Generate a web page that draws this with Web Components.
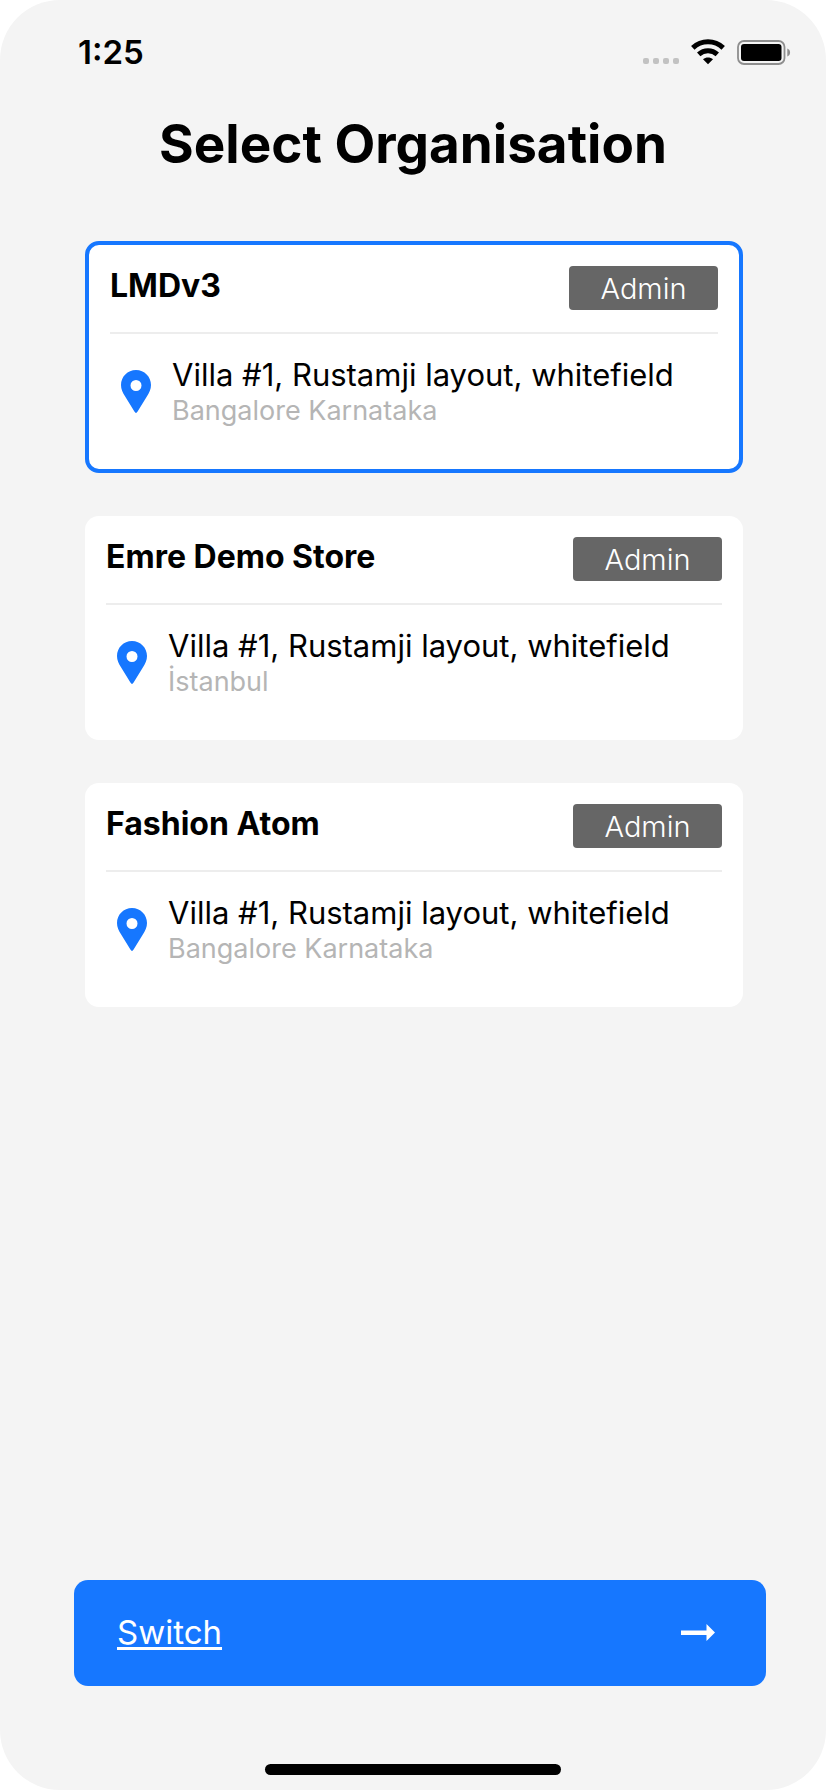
<!DOCTYPE html>
<html lang="en">
<head>
<meta charset="utf-8">
<meta name="viewport" content="width=device-width, initial-scale=1">
<title>Select Organisation</title>
<style>
  html { background: #fff; }
  body { margin: 0 2px 2px 0; font-family: Inter, "Liberation Sans", sans-serif; color: #000; }
</style>
</head>
<body>
<app-screen>
  <status-bar slot="status">1:25</status-bar>
  <span slot="title">Select Organisation</span>
  <org-card selected>
    <span slot="name">LMDv3</span>
    <role-badge slot="role">Admin</role-badge>
    <span slot="address">Villa #1, Rustamji layout, whitefield</span>
    <span slot="city">Bangalore Karnataka</span>
  </org-card>
  <org-card>
    <span slot="name">Emre Demo Store</span>
    <role-badge slot="role">Admin</role-badge>
    <span slot="address">Villa #1, Rustamji layout, whitefield</span>
    <span slot="city">İstanbul</span>
  </org-card>
  <org-card>
    <span slot="name">Fashion Atom</span>
    <role-badge slot="role">Admin</role-badge>
    <span slot="address">Villa #1, Rustamji layout, whitefield</span>
    <span slot="city">Bangalore Karnataka</span>
  </org-card>
  <switch-button slot="action">Switch</switch-button>
</app-screen>

<script>
  const define = (name, html, setup) => {
    const template = document.createElement('template');
    template.innerHTML = html;
    customElements.define(name, class extends HTMLElement {
      constructor() {
        super();
        this.attachShadow({ mode: 'open' }).append(template.content.cloneNode(true));
      }
      connectedCallback() { if (setup) setup(this); }
    });
  };

  define('app-screen', `
    <style>
      :host { display: flex; flex-direction: column; box-sizing: border-box; min-height: calc(100vh - 2px);
              background: #f4f4f4; border-radius: 60px; padding-bottom: 15px; }
      h1 { margin: 0; padding-top: 7px; font-size: 53px; line-height: 66px; font-weight: 700; text-align: center; }
      main { display: flex; flex-direction: column; gap: 43px; padding: 64px 83px 43px 85px; }
      footer { margin-top: auto; padding: 0 60px 0 74px; }
      .home { width: 296px; height: 11px; margin: 78px auto 0; border-radius: 6px; background: #000; }
    </style>
    <slot name="status"></slot>
    <h1><slot name="title"></slot></h1>
    <main><slot></slot></main>
    <footer><slot name="action"></slot></footer>
    <div class="home"></div>
  `);

  define('status-bar', `
    <style>
      :host { display: flex; align-items: center; justify-content: space-between;
              height: 40px; padding: 32px 35px 32px 78px; font-size: 33px; line-height: 40px; font-weight: 600; }
      .icons { display: flex; align-items: center; gap: 12px; }
      svg { display: block; }
    </style>
    <time><slot></slot></time>
    <div class="icons">
      <svg width="36" height="26" viewBox="0 0 36 26" fill="#c2c2c2" aria-hidden="true">
        <rect y="19" width="6" height="6" rx="2"/><rect x="10" y="19" width="6" height="6" rx="2"/>
        <rect x="20" y="19" width="6" height="6" rx="2"/><rect x="30" y="19" width="6" height="6" rx="2"/>
      </svg>
      <svg width="34" height="26" viewBox="0 0 34 26" aria-hidden="true">
        <path d="M1.8 8.9C10.4.8 23.6.8 32.2 8.9" fill="none" stroke="#000" stroke-width="5"/>
        <path d="M7.7 15.3C13 10.5 21 10.5 26.3 15.3" fill="none" stroke="#000" stroke-width="5"/>
        <path d="M12 20.3C14.8 17.9 19.2 17.9 22 20.3L17 25.2Z"/>
      </svg>
      <svg width="54" height="26" viewBox="0 0 54 26" aria-hidden="true">
        <rect x="1" y="2" width="46.5" height="23" rx="6" fill="none" stroke="#8e8e8e" stroke-width="1.8"/>
        <rect x="4" y="5" width="40.5" height="17" rx="3"/>
        <path d="M50.3 9.5C54 10.8 54 16.2 50.3 17.5Z" fill="#8e8e8e"/>
      </svg>
    </div>
  `);

  define('role-badge', `
    <style>
      :host { display: block; box-sizing: border-box; min-width: 149px; padding: 5px 24px 4px; border-radius: 4px;
              background: #666; color: #fff; font-size: 29px; line-height: 35px; font-weight: 300; text-align: center; }
    </style>
    <slot></slot>
  `);

  define('org-card', `
    <style>
      :host { display: block; }
      button { display: block; box-sizing: border-box; width: 100%; margin: 0; padding: 21px 21px 41px;
               border: 0; border-radius: 14px; background: #fff; color: inherit; font: inherit; text-align: left; cursor: pointer; }
      button[aria-pressed="true"] { border: 4px solid #1677ff; }
      .head { display: flex; align-items: flex-start; justify-content: space-between;
              padding-bottom: 22px; border-bottom: 2px solid #ededed; }
      .name { font-size: 32px; line-height: 40px; font-weight: 700; }
      .place { display: flex; align-items: center; padding: 21px 0 0 11px; gap: 21px; }
      svg { display: block; flex: none; }
      .address { display: block; font-size: 31px; line-height: 39px; }
      .city { display: block; font-size: 27px; line-height: 34px; color: #b5b5b5; }
    </style>
    <button type="button" aria-pressed="false">
      <span class="head"><span class="name"><slot name="name"></slot></span><slot name="role"></slot></span>
      <span class="place">
        <svg width="30" height="43" viewBox="0 0 30 43" aria-hidden="true">
          <path fill="#1677ff" fill-rule="evenodd" d="M15 0C6.6 0 0 6.7 0 15C0 19 1.6 22.6 4 26.2L13.4 41.6Q15 44.2 16.6 41.6L26 26.2C28.4 22.6 30 19 30 15C30 6.7 23.4 0 15 0ZM15 10A5.500 5.500 0 1 1 15 21A5.500 5.500 0 1 1 15 10Z"/>
        </svg>
        <span><span class="address"><slot name="address"></slot></span><span class="city"><slot name="city"></slot></span></span>
      </span>
    </button>
  `, host => {
    const button = host.shadowRoot.querySelector('button');
    button.setAttribute('aria-pressed', String(host.hasAttribute('selected')));
    button.addEventListener('click', () => {
      for (const card of host.parentElement.querySelectorAll('org-card')) {
        card.toggleAttribute('selected', card === host);
        card.shadowRoot.querySelector('button').setAttribute('aria-pressed', String(card === host));
      }
    });
  });

  define('switch-button', `
    <style>
      :host { display: block; }
      button { display: flex; align-items: center; justify-content: space-between; box-sizing: border-box; width: 100%;
               margin: 0; padding: 31px 51px 33px 43px; border: 0; border-radius: 14px; background: #1677ff; color: #fff;
               font: inherit; font-size: 33px; line-height: 42px; cursor: pointer; }
      .label { text-decoration: underline; text-decoration-thickness: 3px; text-underline-offset: 3px; text-decoration-skip-ink: none; }
      svg { display: block; }
    </style>
    <button type="button">
      <span class="label"><slot></slot></span>
      <svg width="34" height="18" viewBox="0 0 34 18" fill="#fff" aria-hidden="true"><path d="M0 7.500H25.500V1L34 9.500L25.500 18V12H0Z"/></svg>
    </button>
  `);
</script>
</body>
</html>
